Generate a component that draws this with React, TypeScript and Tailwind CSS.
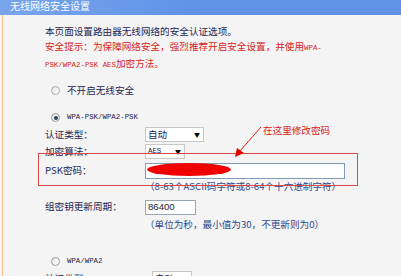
const cjk = "font-['SimSun','Noto_Sans_CJK_SC',sans-serif]";

const Radio = ({ checked, label }: { checked?: boolean; label: string }) => (
	<div className="flex h-[15px] items-center pl-[6px]">
		<span className="flex h-[9px] w-[9px] items-center justify-center rounded-full border border-[#9a9a9a] bg-gradient-to-br from-[#e6e6e6] to-[#ffffff]">
			{checked && <span className="h-[4px] w-[4px] rounded-full bg-[#2d3e4e]" />}
		</span>
		<span className="ml-[7px] font-['Liberation_Mono',monospace] text-[7.4px] text-[#1e2450]">
			{label}
		</span>
	</div>
);

const Select = ({ value, width, mono }: { value: string; width: string; mono?: boolean }) => (
	<div
		className={`flex h-[15px] ${width} items-center justify-between border border-[#c8c8c8] bg-white pl-[2px] pr-[3px]`}
	>
		<span className={mono ? "font-['Liberation_Mono',monospace] text-[7.4px]" : "text-[9.6px]"}>
			{value}
		</span>
		<span className="text-[6px] leading-none text-black">▼</span>
	</div>
);

const Row = ({ label, children, h }: { label: string; children: React.ReactNode; h: string }) => (
	<div className={`flex ${h} items-center`}>
		<span className="w-[100px] text-[9.6px] text-[#1e2450]">{label}</span>
		{children}
	</div>
);

export default function App() {
	return (
		<div className={`relative h-[276px] w-[401px] overflow-hidden bg-[#f4f4f4] ${cjk} leading-none text-[#1e2450]`}>
			<div className="h-[15px] bg-gradient-to-r from-[#78a5ec] via-[#5f92e7] to-[#5f92e7] pl-[10px] text-[10px] leading-[12px] text-white">
				无线网络安全设置
			</div>
			<div className="ml-[2px] h-[261px] border-l border-[#f2c488] pl-[42px] pt-[9px]">
				<p className="whitespace-nowrap text-[9.6px] leading-[15px]">本页面设置路由器无线网络的安全认证选项。</p>
				<p className="whitespace-nowrap text-[9.6px] leading-[15px] text-[#d81e1e]">
					安全提示：为保障网络安全，强烈推荐开启安全设置，并使用
					<span className="font-['Liberation_Mono',monospace] text-[7.4px]">WPA-</span>
				</p>
				<p className="whitespace-nowrap text-[9.6px] leading-[15px] text-[#d81e1e]">
					<span className="font-['Liberation_Mono',monospace] text-[7.4px]">PSK/WPA2-PSK AES</span>
					加密方法。
				</p>

				<div className="mt-[10px]">
					<div className="flex h-[15px] items-center pl-[6px]">
						<span className="h-[9px] w-[9px] rounded-full border border-[#a8a8a8] bg-gradient-to-br from-[#e2e2e2] to-white" />
						<span className="ml-[7px] text-[9.6px]">不开启无线安全</span>
					</div>
				</div>
				<div className="mt-[12px]">
					<Radio checked label="WPA-PSK/WPA2-PSK" />
				</div>

				<div className="mt-px">
					<Row label="认证类型：" h="h-[17px]">
						<Select value="自动" width="w-[59px]" />
					</Row>
					<Row label="加密算法：" h="h-[17px]">
						<Select value="AES" width="w-[40px]" mono />
					</Row>
					<div className="mt-[2px]">
						<Row label="PSK密码：" h="h-[18px]">
							<div className="h-[16px] w-[200px] border border-[#7f9db9] bg-white" />
						</Row>
					</div>
					<div className="flex h-[14px] items-center whitespace-nowrap pl-[100px] text-[9.6px] text-[#2e4a8e]">
						（8-63个ASCII码字符或8-64个十六进制字符）
					</div>
					<div className="mt-[4px]">
						<Row label="组密钥更新周期：" h="h-[18px]">
							<div className="flex h-[15px] w-[51px] items-center border border-[#9aa6b4] bg-white pl-[2px] font-['Liberation_Sans',sans-serif] text-[9.6px] text-[#222]">
								86400
							</div>
						</Row>
					</div>
					<div className="mt-[2px] flex h-[14px] items-center whitespace-nowrap pl-[100px] text-[9.6px] text-[#2e4a8e]">
						（单位为秒，最小值为30，不更新则为0）
					</div>
				</div>

				<div className="mt-[22px]">
					<Radio label="WPA/WPA2" />
				</div>
				<div className="mt-px">
					<Row label="认证类型：" h="h-[17px]">
						<div className="ml-[7px]">
							<Select value="自动" width="w-[40px]" />
						</div>
					</Row>
				</div>
			</div>

			{/* annotation overlay */}
			<div className="absolute left-[38px] top-[153px] h-[33px] w-[320px] border border-[#d84848]" />
			<svg className="absolute left-0 top-0" width="401" height="276" viewBox="0 0 401 276">
				<ellipse cx="189" cy="169.5" rx="42" ry="6.5" fill="#f00000" />
				<line x1="261" y1="127" x2="240" y2="151" stroke="#e02020" strokeWidth="1" />
				<polygon points="235,157 237,148 244,153" fill="#e00000" />
			</svg>
			<div className="absolute left-[263px] top-[124px] text-[9.6px] leading-[13px] text-[#d82020]">
				在这里修改密码
			</div>
		</div>
	);
}
